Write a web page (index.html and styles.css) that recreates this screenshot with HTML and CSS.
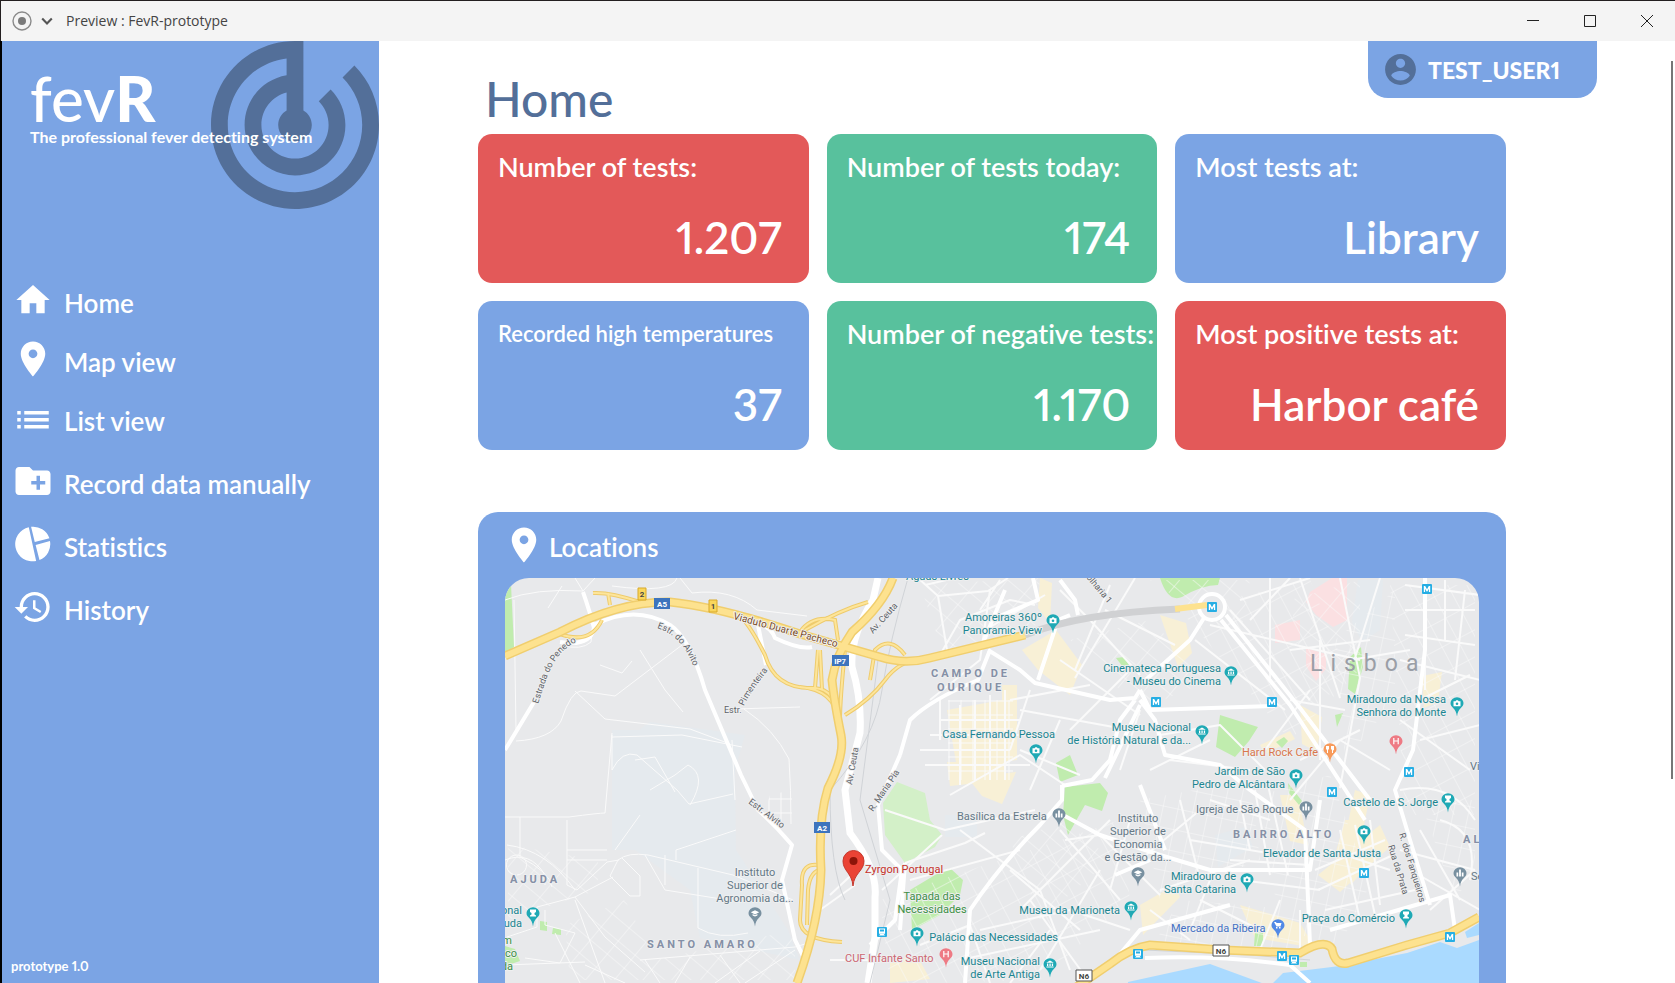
FILE: index.html
```html
<!DOCTYPE html>
<html lang="en">
<head>
<meta charset="utf-8">
<title>Preview : FevR-prototype</title>
<link rel="stylesheet" href="styles.css">
</head>
<body>
<div class="window">
  <header class="titlebar">
    <svg class="record" viewBox="0 0 20 20" aria-hidden="true"><circle cx="10" cy="10" r="9" fill="none" stroke="#8a8a8a" stroke-width="1.4"/><circle cx="10" cy="10" r="4" fill="#7a7a7a"/></svg>
    <svg class="chevron" viewBox="0 0 10 8" aria-hidden="true"><path d="M1 2l4 4 4-4" fill="none" stroke="#555" stroke-width="1.8"/></svg>
    <span class="window-title">Preview : FevR-prototype</span>
    <div class="window-buttons">
      <button type="button" aria-label="Minimize"><svg viewBox="0 0 14 14"><path d="M1 6.500h12"/></svg></button>
      <button type="button" aria-label="Maximize"><svg viewBox="0 0 14 14"><path d="M1.500 1.500h11v11h-11z"/></svg></button>
      <button type="button" aria-label="Close"><svg viewBox="0 0 14 14"><path d="M1 1l12 12M13 1L1 13"/></svg></button>
    </div>
  </header>

  <div class="app">
    <aside class="sidebar">
      <svg class="radar" viewBox="2 2 20 20" aria-hidden="true"><path d="M19.070 4.930l-1.410 1.410C19.100 7.790 20 9.790 20 12c0 4.420-3.580 8-8 8s-8-3.580-8-8c0-4.080 3.050-7.440 7-7.930v2.020C8.160 6.570 6 9.030 6 12c0 3.310 2.690 6 6 6s6-2.690 6-6c0-1.660-.67-3.160-1.760-4.240l-1.410 1.410C15.550 9.900 16 10.900 16 12c0 2.210-1.790 4-4 4s-4-1.790-4-4c0-1.860 1.280-3.410 3-3.860v2.140c-.6.350-1 .98-1 1.720 0 1.100.9 2 2 2s2-.9 2-2c0-.74-.4-1.380-1-1.720V2h-1C6.480 2 2 6.480 2 12s4.480 10 10 10 10-4.480 10-10c0-2.760-1.120-5.260-2.930-7.070z"/></svg>
      <div class="brand">
        <p class="brand-name">fev<b>R</b></p>
        <p class="tagline">The professional fever detecting system</p>
      </div>
      <nav>
        <ul class="menu">
          <li><a href="#home"><svg class="icon icon-small" viewBox="0 0 24 24"><path d="M10 20v-6h4v6h5v-8h3L12 3 2 12h3v8z"/></svg><span>Home</span></a></li>
          <li><a href="#map"><svg class="icon" viewBox="0 0 24 24"><path d="M12 2C8.130 2 5 5.130 5 9c0 5.250 7 13 7 13s7-7.750 7-13c0-3.870-3.130-7-7-7zm0 9.500c-1.380 0-2.500-1.120-2.500-2.500s1.120-2.500 2.500-2.500 2.500 1.120 2.500 2.500-1.120 2.500-2.500 2.500z"/></svg><span>Map view</span></a></li>
          <li><a href="#list"><svg class="icon" viewBox="0 0 24 24"><path d="M3 14h2v-2H3v2zm0 4h2v-2H3v2zm0-8h2V8H3v2zm4 4h14v-2H7v2zm0 4h14v-2H7v2zM7 8v2h14V8H7z"/></svg><span>List view</span></a></li>
          <li><a href="#record"><svg class="icon" viewBox="0 0 24 24"><path d="M20 6h-8l-2-2H4c-1.110 0-1.990.89-1.990 2L2 18c0 1.110.89 2 2 2h16c1.110 0 2-.89 2-2V8c0-1.110-.89-2-2-2zm-1 8h-3v3h-2v-3h-3v-2h3V9h2v3h3v2z"/></svg><span>Record data manually</span></a></li>
          <li><a href="#statistics"><svg class="icon" viewBox="0 0 24 24"><path d="M9.600 2.400A9.800 9.800 0 0 0 13.800 21.700zM10.900 2.200A9.800 9.800 0 0 1 21.400 8.700L13 10.800zM21.700 10.300A9.800 9.800 0 0 1 15.700 21.200L13.500 12.600z"/></svg><span>Statistics</span></a></li>
          <li><a href="#history"><svg class="icon icon-small" viewBox="0 0 24 24"><path d="M13 3c-4.970 0-9 4.030-9 9H1l3.890 3.890.07.140L9 12H6c0-3.870 3.130-7 7-7s7 3.130 7 7-3.130 7-7 7c-1.930 0-3.680-.79-4.940-2.060l-1.420 1.420C8.270 19.990 10.510 21 13 21c4.970 0 9-4.030 9-9s-4.030-9-9-9zm-1 5v5l4.280 2.540.72-1.210-3.500-2.080V8H12z"/></svg><span>History</span></a></li>
        </ul>
      </nav>
      <p class="version">prototype 1.0</p>
    </aside>

    <main class="main">
      <div class="page-head">
        <h1>Home</h1>
        <a class="user" href="#account">
          <svg viewBox="0 0 24 24" aria-hidden="true"><path d="M12 2C6.480 2 2 6.480 2 12s4.480 10 10 10 10-4.480 10-10S17.520 2 12 2zm0 3c1.660 0 3 1.340 3 3s-1.340 3-3 3-3-1.340-3-3 1.340-3 3-3zm0 14.200c-2.500 0-4.710-1.280-6-3.220.03-1.990 4-3.080 6-3.080 1.990 0 5.970 1.090 6 3.080-1.290 1.940-3.500 3.220-6 3.220z"/></svg>
          <span>TEST_USER1</span>
        </a>
      </div>

      <div class="content">
        <section class="cards" aria-label="Key figures">
          <article class="card red"><h2>Number of tests:</h2><p>1.207</p></article>
          <article class="card green"><h2>Number of tests today:</h2><p>174</p></article>
          <article class="card blue"><h2>Most tests at:</h2><p>Library</p></article>
          <article class="card blue"><h2 class="compact">Recorded high temperatures</h2><p>37</p></article>
          <article class="card green"><h2>Number of negative tests:</h2><p>1.170</p></article>
          <article class="card red"><h2>Most positive tests at:</h2><p>Harbor café</p></article>
        </section>

        <section class="locations">
          <h2><svg viewBox="0 0 24 24" aria-hidden="true"><path d="M12 2C8.130 2 5 5.130 5 9c0 5.250 7 13 7 13s7-7.750 7-13c0-3.870-3.130-7-7-7zm0 9.500c-1.380 0-2.500-1.120-2.500-2.500s1.120-2.500 2.500-2.500 2.500 1.120 2.500 2.500-1.120 2.500-2.500 2.500z"/></svg><span>Locations</span></h2>

          <svg class="map" viewBox="505 578 974 520" role="img" aria-label="Map of Lisboa">
            <defs>
              <pattern id="blocks-a" width="17" height="24" patternUnits="userSpaceOnUse" patternTransform="rotate(-28)"><path d="M0 0h17M0 0v24" class="grid"/></pattern>
              <pattern id="blocks-b" width="15" height="21" patternUnits="userSpaceOnUse" patternTransform="rotate(12)"><path d="M0 0h15M0 0v21" class="grid"/></pattern>
              <pattern id="blocks-c" width="12" height="14" patternUnits="userSpaceOnUse"><path d="M0 1h12M1 0v14" class="grid"/></pattern>
              <pattern id="blocks-d" width="22" height="17" patternUnits="userSpaceOnUse" patternTransform="rotate(40)"><path d="M0 0h22M0 0v17" class="grid"/></pattern>
              <g id="pin"><path d="M0 9.500C-1-.5-6.500 0-6.500-5.500a6.500 6.500 0 0 1 13 0C6.500 0 1-.5 0 9.500z" transform="translate(0 3) scale(1 .9)"/></g>
              <g id="camera"><use href="#pin"/><path class="mark" d="M-3.500-3.800h2l.8-1h1.600l.8 1h1.800v5h-7z"/><circle cy="-1.300" r="1.300"/></g>
              <g id="museum"><use href="#pin"/><path class="mark" d="M-3.800-3.200L0-5.600l3.800 2.400zM-3-2.500h1.300v2.600h-1.300zM-.6-2.500h1.300v2.600h-1.300zM1.800-2.500h1.300v2.600h-1.300zM-3.600.5h7.200v1h-7.200z"/></g>
              <g id="tower"><use href="#pin"/><path class="mark" d="M-3-5.500h6v2.500l-1.500 1v1.500l1.500 1v1h-6v-1l1.500-1V-2L-3-3z"/></g>
              <g id="church"><use href="#pin"/><path class="mark" d="M-3.500-2.500h1.700v4h-1.700zM-.9-5.500h1.800v7h-1.800zM1.800-2.500h1.700v4h-1.700z"/></g>
              <g id="school"><use href="#pin"/><path class="mark" d="M-4.200-2.700L0-4.800l4.200 2.100L0-.6zM-2.400-.9L0 .3l2.400-1.200V.5L0 1.600-2.400.5z"/></g>
              <g id="hospital"><use href="#pin"/><path class="mark" d="M-2.800-5h1.200v2.400h3.200V-5h1.200v6.300H1.600v-2.700h-3.200v2.700h-1.200z"/></g>
              <g id="metro"><rect x="-5" y="-5" width="10" height="10" rx="1"/><path class="mark" d="M-3.200 3v-6h1.400L0 .2l1.800-3.200h1.400v6H1.900v-3.300L.4 2.400h-.8l-1.500-2.700V3z"/></g>
              <g id="train"><rect x="-5" y="-5" width="10" height="10" rx="1"/><path class="mark" d="M-3-3.500h6v5.300h-6zM-3 3.500l1.300-1.500h3.400L3 3.500z"/><path d="M-2-2.500h4v2h-4z"/></g>
              <path id="l-penedo" d="M538 704C545 684 548 668 562 652Q572 642 590 636"/>
              <path id="l-alvito" d="M657 628Q690 638 700 690"/>
              <path id="l-viaduto" d="M733 619Q780 632 870 656"/>
              <path id="l-piment" d="M744 706Q751 689 785 650"/>
            </defs>

            <rect x="505" y="578" width="974" height="520" fill="#e8e9eb"/>
            <g fill="#e5eaee">
              <path d="M612 750L650 722L745 735L735 770L736 850L788 930L800 960L700 938L690 890L635 850L612 850z"/>
              <path d="M612 730h100v30h-100zM1358 580h25l-3 50-18 12-10-20zM1215 835l30-8 8 20-35 20zM945 815h32v22h-32z"/>
            </g>
            <g fill="#f8f0d6">
              <path d="M1022 650l34-20 26 35-12 30-32-25zM947 710l55-10v-15h15v75l-60 8zM947 762h58v18l-55 6zM968 778l48-6-14 32-20-8z"/>
              <path d="M1160 615l26 8 6 30-14 14zM1040 578l12 5-2 40-12-15zM1300 705l22 12-5 35-15-8zM1260 745l30-14 5 8-30 15zM1422 676l20-4-4 30-14 6zM1345 820l18 0 8 40-20 25-16-30zM1318 875l62-50 10 22-50 45zM1240 905l60 18 15 25-60-10zM1140 905l35-20 5 12-37 38zM890 955l30 6 10 18-40 4zM1355 790l15 5-10 50-15-8zM1280 795l18 0 10 50-18-4z"/>
            </g>
            <path fill="#fbe0e2" d="M1310 592l22-14h15v42l-14 7-17-12-10-13zM1275 625l25-5v20l-25 3zM1306 648l20 6v15l-10 12-10-15z"/>
            <g fill="#c0ecae">
              <path d="M505 588l6-4 3 63-9 6zM1160 578q8 25 22 19q20-12 36-12l2-7zM1220 715l38 12-9 14-14 16-19-10zM1350 657l11-10 2 20-8 27-7-5zM1276 742l8-5 4 4-6 7zM1335 715l8-2-6 14zM1288 783l14 18-3 4-10-12zM1255 932h8v14h-9zM1300 962h7v5h-7z"/>
              <path d="M1065 787l35-4 8 10-6 18-17-6-17 30-5-20zM950 868l13 12-3 15-20 20-28 15-2-40 25-15zM540 921l7 1v9l-7-1zM553 928l8 1v6l-9-1zM505 946l10 3 5 12-15 5zM1056 763l14-8 8 20-18 7zM1116 658l8-1 5 8-6 2z"/>
              <path fill="#d3f0c8" d="M897 782l28 11 5 27 12 15-7 12-30 16-20-28-2-32z"/>
            </g>
            <path fill="#aadaff" d="M1118 1098L1128 982 1210 964 1270 986 1283 973 1340 966 1407 953 1440 942 1457 948 1479 940V1098zM1465 932l14-9v12l-12 3z"/>

            <g>
              <path fill="url(#blocks-a)" d="M1180 610l130-30 40 100-60 60zM1390 585h85v230h-70zM880 900l240-80 10 80-90 80-150 4z"/>
              <path fill="url(#blocks-b)" d="M1260 795l70-20 40 110-30 60-60-15zM1140 800l110-20 10 80-100 40zM1420 800h55v70l-20 30zM1335 640l60-50v110l-50 60zM1180 900l120 10v40h-150z"/>
              <path fill="url(#blocks-c)" d="M948 700h65v80h-65zM770 795l22-5v34l-30-4z"/>
              <path fill="url(#blocks-d)" d="M565 925l60-25 30 60 140-30v50H570zM508 845l90 15v30l-90 30zM920 585l120-7-5 50-90 30zM1070 640l80-20 60 60-70 30zM1150 580l100 0-10 60zM1290 600l70-20v90l-50 40zM1010 840l60-20 40 40-70 60z"/>
            </g>

            <g class="street">
              <path d="M505 600q30-12 78-9M583 591l-8-13M583 591l12-13M583 592l10 33M593 625l-2 17q-10 9-30 3M514 600l2 130M548 608l14-22M612 586q60 8 65-8M680 578l12 15q40-5 65 17l50 6M682 645l-67 51-34-5q-10 0-20 30-10 18-45 20M575 691l30 28 85 10 40 15M640 650l25 40 18 22M600 665l22 8 10-12M735 709l65-2M744 709q30 20 45 50 2 30 2 65M612 737l70-2 60 12M612 735v35M505 817l64 0q30-4 36-4l7-80M567 820v65l10 5 30-28 12-2M520 817v40q30 15 32 30M567 850h40M567 860h40M612 770q10-20 25-15l40 35 12 14 44-10M735 800l-3-60M650 790l25-15 13-10q20 10 2 40"/>
              <path d="M618 860q10-8 30-5l85 20 60 25M618 860l-8 16 20 20h10v-20l-18-18M645 855l20 35 75 12M665 855v30M698 868v60q20 12 50 5M615 850l25-35M635 760l20-3 20 35M736 830l-60 20v10M575 897l30 40 40 35M575 897l-38 10v20l-30 10M575 897l38-20M575 900l30 83M545 910v15l30 8-15 30-35-5M555 933l25 50M505 965l80-3M585 965l40 18M640 960l155-13 20-6M645 960l15 23M690 957l-15 26M720 955l20 28M760 951l-45 32M795 950l-50 33M507 845q40 5 68 45M505 860q25-10 40 15v10M517 875a10 10 0 1 0-1 0"/>
              <g class="busy">
                <path d="M918 578l20 18 50-5 20-13M938 596l10 60M925 585l30-7M990 590l-10 70-50 40M940 655l20-35 50-20 25 5M1000 580l-20 30M1045 595l-60 35M1060 590l30 30 50 55M1135 578l-60 100M1105 610l70 35M1110 585l-35 85M1060 660l80 55M1130 670l-60 60M1010 700l80-15M1020 710l110 20M940 720h80M930 735h100M920 750h90M925 765h105M960 705v80M975 700v80M990 695v85M1005 690v90M940 700v40M1030 690l-20 60M1060 720l-30 70M1020 750l60 25"/>
                <path d="M885 810l60 20 90-20M942 835l-60 55M960 830l80 60 30 80M905 863l60-20 20-10M1110 820l-90 90M1010 870l70 60M1060 830l60 70M1130 820l-20 70M980 930l90-20 60 20M1030 900l60 83M1100 870l-60 100M960 960l140-30M1010 983l40-53M910 880l110-30M920 945l50-20 20 58M1065 785l-45-30-70 40M1065 840l35-5 60 60M830 895l30-28M820 910l35-25M830 960h50"/>
                <path d="M1195 640l90 70M1210 625l150 35M1230 610l80 90M1240 600l70-22M1250 620l40-42M1270 578v100M1300 578l40 120M1340 578l20 100-20 110M1350 660l60-10M1380 578l-25 80M1290 650l80-10M1310 690l-45 60M1320 640v120M1290 700l55 10M1300 760l60-30M1405 585l75 10M1405 610h70M1405 635l70 10M1425 580v110M1445 580v60M1465 590l-10 90M1400 660l80 20M1420 700l50-25M1390 770l-50-30-50 60M1420 740l60-15M1400 720l70 50M1160 735l60-10 45 45M1170 760l80 10M1150 770l60-30M1140 710l-20 60"/>
                <path d="M1240 800l10 50M1255 790l15 85M1268 785l20 90M1210 800l60 20M1190 840l90 15M1140 860l60-50M1180 800l20 80M1160 890l90-30M1230 860l80 5M1240 880l80 10M1315 870l70-30M1318 890l75-35M1340 830l20 90M1355 825l20 90M1370 820l10 85M1325 910l90-20M1330 850l60 20M1400 850l75 20M1410 870l70 40M1420 830l40 70M1440 820q40 10 30 60M1400 790q50-10 75 30M1430 910l45-40M1190 930l20-50M1200 900l60 30M1280 900l-20 50M1150 910l40 30M1300 910v40"/>
              </g>
            </g>
            <g class="avenue">
              <path d="M505 750L534 702M583 592Q590 612 594 628Q590 647 560 642M594 625Q635 604 670 625Q690 638 705 690L741 775L758 810Q775 825 792 845L782 880L795 940L805 960"/>
              <path d="M766 665L758 625Q770 625 775 638Q800 650 812 647M980 650L1005 590M988 650L1020 670L1035 683L1110 700L1135 698L1140 690M1140 705L1105 778M1038 680L1058 620L1070 615M1033 578L1038 600L990 620M900 755L910 720Q930 700 978 680L990 650M900 755L878 805L882 850L902 870L895 920L870 945M905 863L900 930M965 983L970 910Q1000 865 1040 825L1062 800V785M1063 815L1100 835L1160 855L1210 870L1310 870L1320 800M1062 786L1092 780L1110 760L1120 720L1135 700M1140 690L1150 710L1275 706M1140 685L1190 640L1204 618M1221 620L1290 705L1365 820M1226 615L1300 708L1370 800M1425 578V650L1413 750L1395 790L1410 840L1430 905M1060 580L1075 600L1078 615M1140 700L1155 720L1165 755L1220 765L1250 790L1305 830L1310 945M1330 930L1450 895L1455 930M1140 785L1165 850M1145 958Q1220 955 1290 965L1310 983M1115 875L1150 860M1115 960L1140 930L1230 905"/>
              <circle cx="1212" cy="607" r="13" fill="#e8e9eb"/>
            </g>
            <path class="wide" d="M878 578L873 600Q850 637 852 667Q862 700 860 733L845 790L850 833Q878 870 875 897V937L868 983"/>
            <path class="rail" d="M908 578Q890 640 882 690Q875 740 830 790Q830 870 845 900M878 660L860 800L890 900L870 983M1145 950L1250 955L1310 960"/>
            <path fill="none" stroke="#d0d1d3" stroke-width="7" d="M1025 635Q1080 613 1180 609"/>

            <g class="ramp-edge">
              <path id="ramps" d="M593 593Q610 592 640 602M608 593L610 605M560 634Q590 645 602 620M740 616Q750 625 765 655Q775 690 815 688Q835 690 838 715M818 650L815 688M800 632Q812 615 835 620L838 640M805 630Q840 610 868 602M820 650L822 690M845 650Q840 700 840 720M870 680L875 650Q890 635 905 655M845 715Q870 700 885 680Q900 660 920 660M800 687Q835 690 838 720M823 866Q800 860 802 885L800 920Q800 940 842 942M822 870Q810 870 808 890L807 925"/>
            </g>
            <use href="#ramps" class="ramp"/>
            <g fill="none">
              <g stroke="#f0ce6e" stroke-width="9">
                <path id="a5" d="M505 656L560 632Q620 601 670 602Q720 607 800 634L880 657Q905 665 930 658L1025 635"/>
                <path id="a2" d="M893 578Q883 605 852 632Q836 655 832 680Q834 700 841 735Q845 755 828 788Q818 820 821 870Q820 920 797 983"/>
                <path id="n6" d="M1075 988L1110 964Q1130 948 1150 945L1223 950L1300 953Q1325 938 1332 949Q1335 966 1348 963L1407 945L1450 933L1479 917"/>
              </g>
              <g stroke="#fde28f" stroke-width="6"><use href="#a5"/><use href="#a2"/><use href="#n6"/><path d="M1175 609l32-4"/></g>
            </g>

            <g class="shield">
              <path fill="#3d74bd" d="M654 598h16v11h-16zM814 822h16v11h-16zM832 655h17v11h-17z"/>
              <path fill="#f9d65c" stroke="#d9a928" d="M638 588h8v12h-8zM709 600h8v12h-8z"/>
              <path fill="#fff" stroke="#555" d="M1076 970h16v11h-16zM1213 945h16v11h-16z"/>
              <g class="mark"><text x="662" y="607">A5</text><text x="822" y="831">A2</text><text x="840" y="664">IP7</text></g>
              <text x="642" y="597">2</text><text x="713" y="609">1</text><text x="1084" y="979">N6</text><text x="1221" y="954">N6</text>
            </g>

            <g class="road-name">
              <text><textPath href="#l-penedo">Estrada do Penedo</textPath></text>
              <text><textPath href="#l-alvito">Estr. do Alvito</textPath></text>
              <text class="brown"><textPath href="#l-viaduto">Viaduto Duarte Pacheco</textPath></text>
              <text x="724" y="713">Estr.</text><text><textPath href="#l-piment">Pimenteira</textPath></text>
              <text transform="translate(873 634) rotate(-48)">Av. Ceuta</text>
              <text transform="translate(852 785) rotate(-80)">Av. Ceuta</text>
              <text transform="translate(873 812) rotate(-56)">R. Maria Pia</text>
              <text transform="translate(748 803) rotate(37)">Estr. Alvito</text>
              <text transform="translate(1399 834) rotate(73)">R. dos Fanqueiros</text>
              <text transform="translate(1388 846) rotate(73)">Rua da Prata</text>
              <text transform="translate(1083 574) rotate(50)">colharia 1</text>
            </g>

            <g class="district">
              <text x="931" y="677">CAMPO DE</text><text x="937" y="691">OURIQUE</text>
              <text x="1233" y="838">BAIRRO ALTO</text><text x="647" y="948">SANTO AMARO</text>
              <text x="510" y="883">AJUDA</text><text x="1463" y="843">AL</text>
            </g>
            <text class="city" x="1310" y="671">Lisboa</text>

            <g class="place teal">
              <text x="906" y="580">Águas Livres</text>
              <g class="end">
                <text x="1042" y="621">Amoreiras 360º</text><text x="1042" y="634">Panoramic View</text>
                <text x="1055" y="738">Casa Fernando Pessoa</text>
                <text x="1221" y="672">Cinemateca Portuguesa</text><text x="1221" y="685">- Museu do Cinema</text>
                <text x="1191" y="731">Museu Nacional</text><text x="1191" y="744">de História Natural e da...</text>
                <text x="1446" y="703">Miradouro da Nossa</text><text x="1446" y="716">Senhora do Monte</text>
                <text x="1285" y="775">Jardim de São</text><text x="1285" y="788">Pedro de Alcântara</text>
                <text x="1438" y="806">Castelo de S. Jorge</text>
                <text x="1381" y="857">Elevador de Santa Justa</text>
                <text x="1236" y="880">Miradouro de</text><text x="1236" y="893">Santa Catarina</text>
                <text x="1395" y="922">Praça do Comércio</text>
                <text x="1120" y="914">Museu da Marioneta</text>
                <text x="1058" y="941">Palácio das Necessidades</text>
                <text x="1040" y="965">Museu Nacional</text><text x="1040" y="978">de Arte Antiga</text>
                <text x="522" y="914">onal</text><text x="522" y="927">uda</text>
              </g>
            </g>
            <g class="place green-text end"><text x="512" y="944">m</text><text x="517" y="957">co</text><text x="513" y="970">da</text></g>
            <g class="place green-text middle"><text x="932" y="900">Tapada das</text><text x="932" y="913">Necessidades</text></g>
            <g class="place slate middle">
              <text x="1138" y="822">Instituto</text><text x="1138" y="835">Superior de</text><text x="1138" y="848">Economia</text><text x="1138" y="861">e Gestão da...</text>
              <text x="755" y="876">Instituto</text><text x="755" y="889">Superior de</text><text x="755" y="902">Agronomia da...</text>
            </g>
            <g class="place slate"><text x="957" y="820">Basílica da Estrela</text><text x="1196" y="813">Igreja de São Roque</text><text x="1470" y="770">Vi</text><text x="1471" y="880">Se</text></g>
            <text class="place orange" x="1242" y="756">Hard Rock Cafe</text>
            <text class="place pink" x="845" y="962">CUF Infante Santo</text>
            <text class="place royal" x="1171" y="932">Mercado da Ribeira</text>
            <text class="place crimson" x="865" y="873">Zyrgon Portugal</text>

            <g fill="#1fa9b5">
              <use href="#camera" x="1053" y="622"/><use href="#camera" x="1036" y="752"/><use href="#camera" x="1457" y="705"/><use href="#camera" x="1296" y="777"/><use href="#camera" x="1364" y="833"/><use href="#camera" x="1247" y="881"/><use href="#camera" x="917" y="935"/>
              <use href="#museum" x="1231" y="674"/><use href="#museum" x="1202" y="733"/><use href="#museum" x="1131" y="909"/><use href="#museum" x="1050" y="966"/>
              <use href="#tower" x="1448" y="801"/><use href="#tower" x="1406" y="917"/><use href="#tower" x="533" y="915"/>
            </g>
            <g fill="#7890a0"><use href="#church" x="1059" y="816"/><use href="#church" x="1306" y="809"/><use href="#church" x="1460" y="875"/><use href="#school" x="1138" y="875"/><use href="#school" x="755" y="915"/></g>
            <g fill="#ee7a84"><use href="#hospital" x="1396" y="743"/><use href="#hospital" x="946" y="956"/></g>
            <g fill="#f79a5b"><use href="#pin" x="1330" y="751"/><path class="mark" d="M1326 746h3v3l-1 1v3h-1v-3l-1-1zM1331 746h3v4l-1 .5v2.500h-1v-3l-1-1z"/></g>
            <g fill="#5189e6"><use href="#pin" x="1278" y="927"/><path class="mark" d="M1274 922h2l.5 1h5l-1 3.500h-4zM1276 927h1.500v1.500h-1.500zM1279 927h1.500v1.500h-1.500z"/></g>
            <g fill="#26aee4">
              <use href="#metro" x="1212" y="607"/><use href="#metro" x="1427" y="589"/><use href="#metro" x="1156" y="702"/><use href="#metro" x="1272" y="702"/><use href="#metro" x="1409" y="772"/><use href="#metro" x="1332" y="792"/><use href="#metro" x="1364" y="873"/><use href="#metro" x="1450" y="937"/><use href="#metro" x="1282" y="956"/>
              <use href="#train" x="1294" y="960"/><use href="#train" x="882" y="932"/><use href="#train" x="1138" y="954"/>
            </g>
            <path fill="#ea4335" stroke="#c5372c" d="M853 886C852 873 843 871 843 861a10.500 10.500 0 0 1 21 0C864 871 854 873 853 886z"/>
            <circle cx="853.500" cy="861" r="4" fill="#8c1409"/>
          </svg>
        </section>
      </div>
      <div class="scroll-thumb" aria-hidden="true"></div>
    </main>
  </div>
</div>
</body>
</html>
```

FILE: styles.css
```css
* { box-sizing: border-box; }

body {
  margin: 0;
  font-family: Lato, "Open Sans", sans-serif;
  font-weight: 500;
  font-variant-ligatures: none;
  font-variant-numeric: proportional-nums;
  color: #fff;
  background: #fff;
}

h1, h2, p, ul { margin: 0; padding: 0; font-weight: inherit; }
ul { list-style: none; }
a { color: inherit; text-decoration: none; }

.window {
  display: flex;
  flex-direction: column;
  height: 100vh;
  overflow: hidden;
}

/* Window chrome */
.titlebar {
  display: flex;
  align-items: center;
  flex: none;
  height: 41px;
  padding-left: 11px;
  background: #f4f4f4;
  border-top: 1px solid #231f20;
  border-left: 1px solid #231f20;
}
.record { width: 20px; height: 20px; }
.chevron { width: 12px; height: 10px; margin: 0 13px 0 9px; }
.window-title {
  font: 400 14px/20px "Open Sans", "Noto Sans", sans-serif;
  color: #444;
}
.window-buttons { display: flex; margin-left: auto; }
.window-buttons button {
  width: 57px;
  height: 40px;
  padding: 0;
  border: 0;
  background: none;
}
.window-buttons svg {
  display: block;
  width: 14px;
  height: 14px;
  margin: auto;
  fill: none;
  stroke: #222;
}

.app {
  display: grid;
  grid-template-columns: 379px minmax(0, 1fr);
  flex: 1;
  min-height: 0;
}

/* Sidebar */
.sidebar {
  position: relative;
  display: flex;
  flex-direction: column;
  background: #7ba4e4;
  border-left: 2px solid #000;
}
.radar {
  position: absolute;
  top: 0;
  right: 0;
  width: 168px;
  height: 168px;
  fill: #536f99;
}
.brand { position: relative; padding: 27px 0 0 28px; }
.brand-name { font-size: 62px; line-height: 60px; }
.brand-name b { font-weight: 900; }
.tagline {
  font-size: 16px;
  line-height: 18px;
  font-weight: 700;
  white-space: nowrap;
}
.menu { padding: 133px 0 0 10px; }
.menu li { margin-bottom: 17px; }
.menu li:nth-child(n + 3) { margin-bottom: 21px; }
.menu a {
  display: flex;
  align-items: center;
  gap: 10px;
  height: 42px;
  font-size: 26px;
  font-weight: 600;
  line-height: 36px;
  white-space: nowrap;
}
.menu span { padding-top: 6px; }
.icon { width: 42px; height: 42px; fill: #fff; }
.icon-small { height: 40px; }
.version {
  margin-top: auto;
  padding: 0 0 8px 9px;
  font-size: 13px;
  line-height: 18px;
  font-weight: 700;
}

/* Main column */
.main { position: relative; overflow: hidden; }
.page-head {
  display: flex;
  justify-content: space-between;
  align-items: flex-start;
  height: 93px;
  padding: 0 78px 0 106px;
}
h1 {
  padding-top: 28px;
  font-size: 48px;
  line-height: 60px;
  color: #536f99;
}
.user {
  display: flex;
  align-items: center;
  gap: 9px;
  min-width: 229px;
  height: 57px;
  padding: 0 32px 0 14px;
  border-radius: 0 0 20px 20px;
  background: #7ba4e4;
  font-size: 23px;
  font-weight: 900;
}
.user svg { width: 37px; height: 37px; fill: #536f99; }

.content { padding: 0 169px 0 99px; }
.cards {
  display: grid;
  grid-template-columns: repeat(3, minmax(0, 1fr));
  gap: 18px;
}
.card {
  display: flex;
  flex-direction: column;
  justify-content: space-between;
  height: 149px;
  padding: 15px 27px 18px 20px;
  border-radius: 14px;
  font-weight: 600;
  white-space: nowrap;
}
.card h2 { font-size: 27px; line-height: 36px; }
.card .compact { font-size: 22px; }
.card p { font-size: 44px; line-height: 56px; text-align: right; }
.red { background: #e35959; }
.green { background: #58c19d; }
.blue { background: #7ba4e4; }

.locations {
  margin-top: 62px;
  padding: 0 27px 27px;
  border-radius: 20px;
  background: #7ba4e4;
}
.locations h2 {
  display: flex;
  align-items: center;
  height: 66px;
  gap: 4px;
  font-size: 26px;
  font-weight: 600;
}
.locations h2 svg { width: 42px; height: 42px; fill: #fff; margin-left: -2px; }
.locations h2 span { padding-top: 4px; }

.scroll-thumb {
  position: absolute;
  top: 20px;
  right: 2px;
  width: 2px;
  height: 718px;
  background: #767676;
}

/* Map */
.map {
  display: block;
  width: 100%;
  border-radius: 24px;
  font-family: Roboto, sans-serif;
  font-size: 11px;
  font-weight: 400;
}
.grid { fill: none; stroke: #fafafa; stroke-width: 1; }
.street { fill: none; stroke: #fafafa; stroke-width: 1; stroke-linejoin: round; }
.busy { stroke-width: 2; }
.avenue { fill: none; stroke: #fff; stroke-width: 4; stroke-linejoin: round; }
.wide { fill: none; stroke: #fff; stroke-width: 7; }
.rail { fill: none; stroke: #d0d3d7; stroke-width: 1; }
.ramp-edge { fill: none; stroke: #eecb6c; stroke-width: 4; }
.ramp { fill: none; stroke: #fde59a; stroke-width: 2; }
.mark { fill: #fff; }
.shield { font-size: 8px; font-weight: 700; text-anchor: middle; fill: #444; }
.shield path { stroke-width: 1; }
.shield .mark { fill: #fff; }
.road-name { font-size: 9px; fill: #5f6368; }
.brown { fill: #7a4a1d; font-size: 10px; }
.place, .road-name, .district { paint-order: stroke; stroke: #eeeff0; stroke-width: 2px; stroke-linejoin: round; }
.district { font-weight: 700; letter-spacing: 3px; fill: #8590a6; font-size: 11px; }
.city { font-size: 23px; letter-spacing: 8px; fill: #9a9ea6; }
.end { text-anchor: end; }
.middle { text-anchor: middle; }
.teal { fill: #1b8591; }
.slate { fill: #647887; }
.green-text { fill: #3d8f45; }
.orange { fill: #d9774c; }
.pink { fill: #cc6672; }
.royal { fill: #4371c4; }
.crimson { fill: #c5302b; }
```
